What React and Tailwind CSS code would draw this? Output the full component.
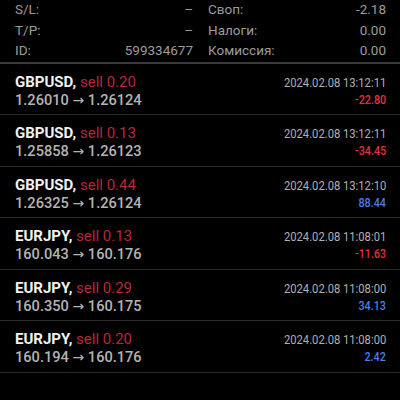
const trades = [
  { sym: "GBPUSD", vol: "0.20", from: "1.26010", to: "1.26124", time: "2024.02.08 13:12:11", p: "-22.80", neg: true },
  { sym: "GBPUSD", vol: "0.13", from: "1.25858", to: "1.26123", time: "2024.02.08 13:12:11", p: "-34.45", neg: true },
  { sym: "GBPUSD", vol: "0.44", from: "1.26325", to: "1.26124", time: "2024.02.08 13:12:10", p: "88.44", neg: false },
  { sym: "EURJPY", vol: "0.13", from: "160.043", to: "160.176", time: "2024.02.08 11:08:01", p: "-11.63", neg: true },
  { sym: "EURJPY", vol: "0.29", from: "160.350", to: "160.175", time: "2024.02.08 11:08:00", p: "34.13", neg: false },
  { sym: "EURJPY", vol: "0.20", from: "160.194", to: "160.176", time: "2024.02.08 11:08:00", p: "2.42", neg: false },
];

function HeaderRow({ l1, v1, l2, v2 }) {
  return (
    <div className="grid grid-cols-2 gap-[15px] h-[20.5px] leading-[20.5px] text-[13.5px] text-[#9c9c9c]">
      <div className="flex justify-between">
        <span>{l1}</span>
        <span>{v1}</span>
      </div>
      <div className="flex justify-between">
        <span>{l2}</span>
        <span>{v2}</span>
      </div>
    </div>
  );
}

export default function App() {
  return (
    <div className="w-[400px] h-[400px] overflow-hidden bg-black" style={{ fontFamily: "Roboto, 'Noto Sans', sans-serif" }}>
      <div className="mt-[-1px] pl-[15px] pr-[14px]">
        <HeaderRow l1="S/L:" v1="–" l2="Своп:" v2="-2.18" />
        <HeaderRow l1="T/P:" v1="–" l2="Налоги:" v2="0.00" />
        <HeaderRow l1="ID:" v1="599334677" l2="Комиссия:" v2="0.00" />
      </div>
      <div className="mt-[1px] h-[2px] bg-[#3a3a3a]" />
      {trades.map((t, i) => (
        <div key={i} className="flex justify-between pl-[15px] pr-[14px] pt-[9px] pb-[5.5px] border-b border-[#2c2c2c]">
          <div className="flex flex-col">
            <div className="h-[18px] leading-[18px] text-[15px]">
              <span className="font-bold text-[#f2f2f2]">{t.sym},</span>{" "}
              <span className="text-[#b8283a]">sell {t.vol}</span>
            </div>
            <div className="h-[18px] leading-[18px] text-[14.6px] font-medium text-[#b4b4b4]">
              {t.from} <span className="font-['DejaVu_Sans'] text-[14px] font-normal">→</span> {t.to}
            </div>
          </div>
          <div className="flex flex-col items-end">
            <div className="h-[18px] leading-[18px] text-[13.5px] text-[#b0b0b0] scale-x-[0.83] origin-right whitespace-nowrap">{t.time}</div>
            <div className={"h-[18px] leading-[18px] text-[12.5px] font-medium scale-x-[0.86] origin-right " + (t.neg ? "text-[#e0303e]" : "text-[#4a7de6]")}>
              {t.p}
            </div>
          </div>
        </div>
      ))}
    </div>
  );
}
